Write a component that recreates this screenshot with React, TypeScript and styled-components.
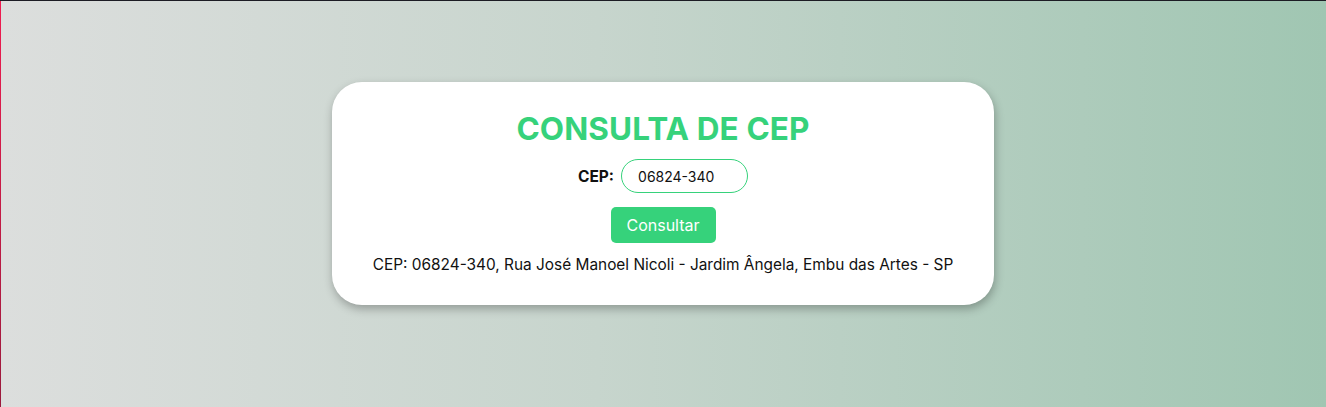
import React, { useState } from "react";
import styled, { createGlobalStyle } from "styled-components";

const GlobalStyle = createGlobalStyle`
  html, body { margin: 0; padding: 0; }
  body {
    font-family: Inter, "Noto Sans", sans-serif;
  }
`;

const Page = styled.div`
  box-sizing: border-box;
  width: 100%;
  height: 407px;
  display: flex;
  justify-content: center;
  align-items: flex-start;
  padding-top: 82px;
  background:
    linear-gradient(#1c1c24, #1c1c24) top left / 100% 1px no-repeat,
    linear-gradient(to bottom, #f01c50, #9a1a3c) top left / 1px 100% no-repeat,
    linear-gradient(to right, #dcdedd 0%, #c7d5cd 45%, #a0c6b2 100%);
`;

const Card = styled.div`
  box-sizing: border-box;
  width: 662px;
  height: 223px;
  background: #ffffff;
  border-radius: 30px;
  box-shadow: 1px 4px 10px rgba(0, 0, 0, 0.28);
  display: flex;
  flex-direction: column;
  align-items: center;
  padding-top: 28px;
`;

const Title = styled.h1`
  margin: 0;
  font-family: Inter, "Noto Sans", sans-serif;
  font-weight: 700;
  font-size: 31.5px;
  line-height: 38px;
  color: #36d27b;
  letter-spacing: 0.1px;
`;

const Row = styled.div`
  display: flex;
  align-items: center;
  gap: 7px;
  margin-top: 11px;
`;

const Label = styled.label`
  font-weight: 700;
  font-size: 15.5px;
  color: #111;
`;

const Input = styled.input`
  box-sizing: border-box;
  width: 127px;
  height: 34px;
  border: 1px solid #36d27b;
  border-radius: 17px;
  padding: 0 16px;
  font-family: Inter, "Noto Sans", sans-serif;
  font-size: 14px;
  color: #111;
  outline: none;
  background: #fff;
`;

const Button = styled.button`
  box-sizing: border-box;
  margin-top: 14px;
  width: 105px;
  height: 36px;
  border: none;
  border-radius: 5px;
  background: #36d27b;
  color: #fff;
  font-family: Inter, "Noto Sans", sans-serif;
  font-size: 16px;
  cursor: pointer;
`;

const Result = styled.p`
  margin: 12px 0 0;
  font-size: 15.4px;
  line-height: 20px;
  color: #111;
`;

export default function App() {
  const [cep, setCep] = useState("06824-340");
  return (
    <>
      <GlobalStyle />
      <Page>
        <Card>
          <Title>CONSULTA DE CEP</Title>
          <Row>
            <Label htmlFor="cep">CEP:</Label>
            <Input id="cep" value={cep} onChange={(e) => setCep(e.target.value)} />
          </Row>
          <Button>Consultar</Button>
          <Result>
            CEP: 06824-340, Rua José Manoel Nicoli - Jardim Ângela, Embu das Artes - SP
          </Result>
        </Card>
      </Page>
    </>
  );
}
